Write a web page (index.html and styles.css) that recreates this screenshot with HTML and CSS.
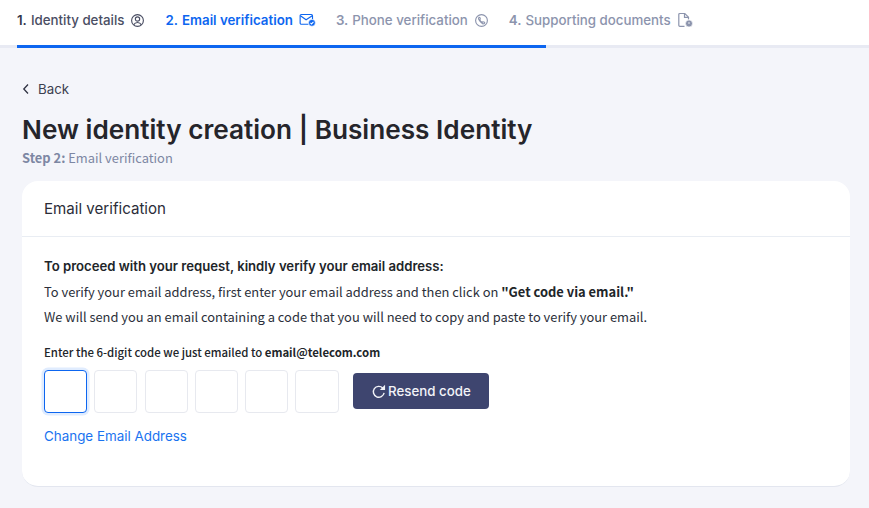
FILE: index.html
```html
<!DOCTYPE html>
<html lang="en">
<head>
<meta charset="utf-8">
<title>New identity creation</title>
<link rel="stylesheet" href="styles.css">
</head>
<body>
<header class="topbar">
  <nav class="steps">
    <div class="step step-done"><span class="num">1.</span><span>Identity details</span>
      <svg class="ico" viewBox="0 0 16 16"><circle cx="8" cy="8" r="6.3"/><circle cx="8" cy="6.4" r="2.3"/><path d="M4 12.6c.8-1.8 2.2-2.5 4-2.5s3.200.7 4 2.500"/></svg>
    </div>
    <div class="step step-active"><span class="num">2.</span><span>Email verification</span>
      <svg class="ico ico-wide" viewBox="0 0 18 14"><path d="M10 11.500H2.500a1.300 1.300 0 0 1-1.300-1.300V2.500a1.300 1.300 0 0 1 1.300-1.300h10.500a1.300 1.300 0 0 1 1.300 1.300v4"/><path d="M1.500 2.500l6 4.200 6.500-4.200"/><circle class="fill" cx="13.700" cy="10" r="3.600"/><path class="tick" d="M12.100 10l1.200 1.200 2-2.200"/></svg>
    </div>
    <div class="step"><span class="num">3.</span><span>Phone verification</span>
      <svg class="ico" viewBox="0 0 16 16"><circle cx="8" cy="8" r="6.300"/><path d="M5.500 4.500c.9 0 1.200 1.200 1.200 1.900l-.6.700c.5 1.300 1.500 2.300 2.800 2.800l.7-.6c.7 0 1.900.3 1.900 1.200-.3 1-1.600 1.200-2.500.9C7.200 9.900 6 8.800 5.100 7c-.4-1-.5-2 .4-2.500z"/></svg>
    </div>
    <div class="step"><span class="num">4.</span><span>Supporting documents</span>
      <svg class="ico ico-doc" viewBox="0 0 16 16"><path d="M7.500 14.300H2.800a1 1 0 0 1-1-1V2.500a1 1 0 0 1 1-1h5l3.700 3.700v2.300"/><path d="M7.500 1.700v3.600h3.800"/><circle class="fill-gray" cx="12" cy="11.500" r="3.500"/><path class="tick" d="M12 10.200v1.500M12 13v.1"/></svg>
    </div>
  </nav>
  <div class="track"><div class="fill-bar"></div></div>
</header>
<main class="page">
  <a class="back"><svg class="chev" viewBox="0 0 8 12"><path d="M6 1.500 1.800 6 6 10.500"/></svg><span>Back</span></a>
  <h1 class="title">New identity creation | Business Identity</h1>
  <p class="sub"><b>Step 2:</b> Email verification</p>
  <section class="card">
    <div class="card-head">Email verification</div>
    <div class="card-body">
      <p class="lead">To proceed with your request, kindly verify your email address:</p>
      <p class="line">To verify your email address, first enter your email address and then click on <b>"Get code via email."</b></p>
      <p class="line">We will send you an email containing a code that you will need to copy and paste to verify your email.</p>
      <p class="label">Enter the 6-digit code we just emailed to <b>email@telecom.com</b></p>
      <div class="code-row">
        <div class="cell cell-focus"></div>
        <div class="cell"></div>
        <div class="cell"></div>
        <div class="cell"></div>
        <div class="cell"></div>
        <div class="cell"></div>
        <button class="resend" type="button"><svg class="redo" viewBox="0 0 16 16"><path d="M12.500 4.300A5.800 5.800 0 1 0 14 9.500"/><path class="solid" d="M15 .8v5.600H9.400z"/></svg>Resend code</button>
      </div>
      <a class="change">Change Email Address</a>
    </div>
  </section>
</main>
</body>
</html>
```

FILE: styles.css
```css
* { box-sizing: border-box; }
html, body { margin: 0; padding: 0; }
body {
  width: 869px;
  height: 508px;
  overflow: hidden;
  background: #f4f5fa;
  font-family: "Noto Sans CJK SC", "Noto Sans", sans-serif;
  color: #212529;
}
.topbar { background: #fff; height: 48px; display: flex; flex-direction: column; }
.steps {
  height: 45px;
  display: flex;
  align-items: center;
  padding: 0 0 5px 17px;
  gap: 20px;
  font-family: Inter, sans-serif;
  font-size: 13.300px;
  font-weight: 500;
  color: #8c94ad;
}
.step { display: flex; align-items: center; white-space: nowrap; }
.num { font-weight: 600; margin-right: 4px; }
.step-done { color: #4a4e63; }
.step-done .num { color: #33364a; }
.step-active { color: #0d66f0; font-weight: 600; }
.ico { width: 15px; height: 15px; margin-left: 6px; fill: none; stroke: currentColor; stroke-width: 1.200; }
.ico-wide { width: 17px; height: 14px; }
.ico-doc { width: 16px; height: 16px; }
.fill { fill: #0d66f0; stroke: #fff; stroke-width: .6; }
.fill-gray { fill: #8c94ad; stroke: #fff; stroke-width: .6; }
.tick { stroke: #fff; stroke-width: 1.100; }
.track { height: 3px; background: #e8eaf3; padding-left: 17px; }
.fill-bar { width: 529px; height: 3px; background: #0d66f0; }
.page { padding: 32px 19px 0 22px; }
.back {
  display: flex;
  align-items: center;
  gap: 8px;
  height: 17px;
  font-family: Inter, sans-serif;
  font-size: 13.300px;
  color: #3c3f50;
}
.chev { width: 8px; height: 12px; fill: none; stroke: #2f3242; stroke-width: 1.300; }
.title {
  margin: 17px 0 0;
  height: 31px;
  line-height: 31px;
  font-family: Inter, sans-serif;
  font-size: 26.200px;
  font-weight: 600;
  color: #25252b;
  white-space: nowrap;
}
.sub { margin: 3px 0 0; height: 19px; line-height: 19px; font-size: 12.900px; color: #7d87a3; }
.sub b { font-weight: 700; }
.card {
  margin-top: 14px;
  height: 306px;
  background: #fff;
  border-radius: 16px;
  border-bottom: 1px solid #e3e6ef;
}
.card-head {
  height: 56px;
  padding-left: 22px;
  line-height: 55px;
  border-bottom: 1px solid #e9edf3;
  font-family: Inter, sans-serif;
  font-size: 15.100px;
  color: #2b2d38;
}
.card-body { padding: 20px 22px 0; }
.card-body p { margin: 0; white-space: nowrap; }
.lead { height: 19px; line-height: 19px; font-family: Inter, sans-serif; font-size: 13.150px; font-weight: 600; color: #212529; }
.line { height: 25px; line-height: 25px; font-size: 12.900px; color: #2b2f3a; }
.lead + .line { margin-top: 3px; }
.line b { font-weight: 700; color: #212529; }
.label { margin-top: 14px !important; height: 18px; line-height: 18px; font-size: 11.400px; font-weight: 500; color: #212529; }
.label b { font-weight: 700; }
.code-row { margin-top: 9px; display: flex; align-items: flex-start; gap: 7.100px; }
.cell { width: 43.200px; height: 43px; border: 1px solid #e7e9ef; border-radius: 4px; background: #fff; }
.cell-focus { border: 1.500px solid #0d66f0; box-shadow: 0 0 0 2.500px #e0ecfe; }
.resend {
  margin: 3px 0 0 7.200px;
  width: 136px;
  height: 36px;
  display: flex;
  align-items: center;
  justify-content: center;
  gap: 2px;
  border: 0;
  border-radius: 4px;
  background: #3e456f;
  color: #f2f3f8;
  font-family: Inter, sans-serif;
  font-size: 13.300px;
  font-weight: 500;
}
.redo { width: 15px; height: 15px; fill: none; stroke: #f2f3f8; stroke-width: 1.500; }
.solid { fill: #f2f3f8; stroke: none; }
.change {
  display: block;
  margin-top: 14px;
  height: 18px;
  line-height: 18px;
  font-family: Inter, sans-serif;
  font-size: 13.400px;
  color: #1a73f0;
}
```
